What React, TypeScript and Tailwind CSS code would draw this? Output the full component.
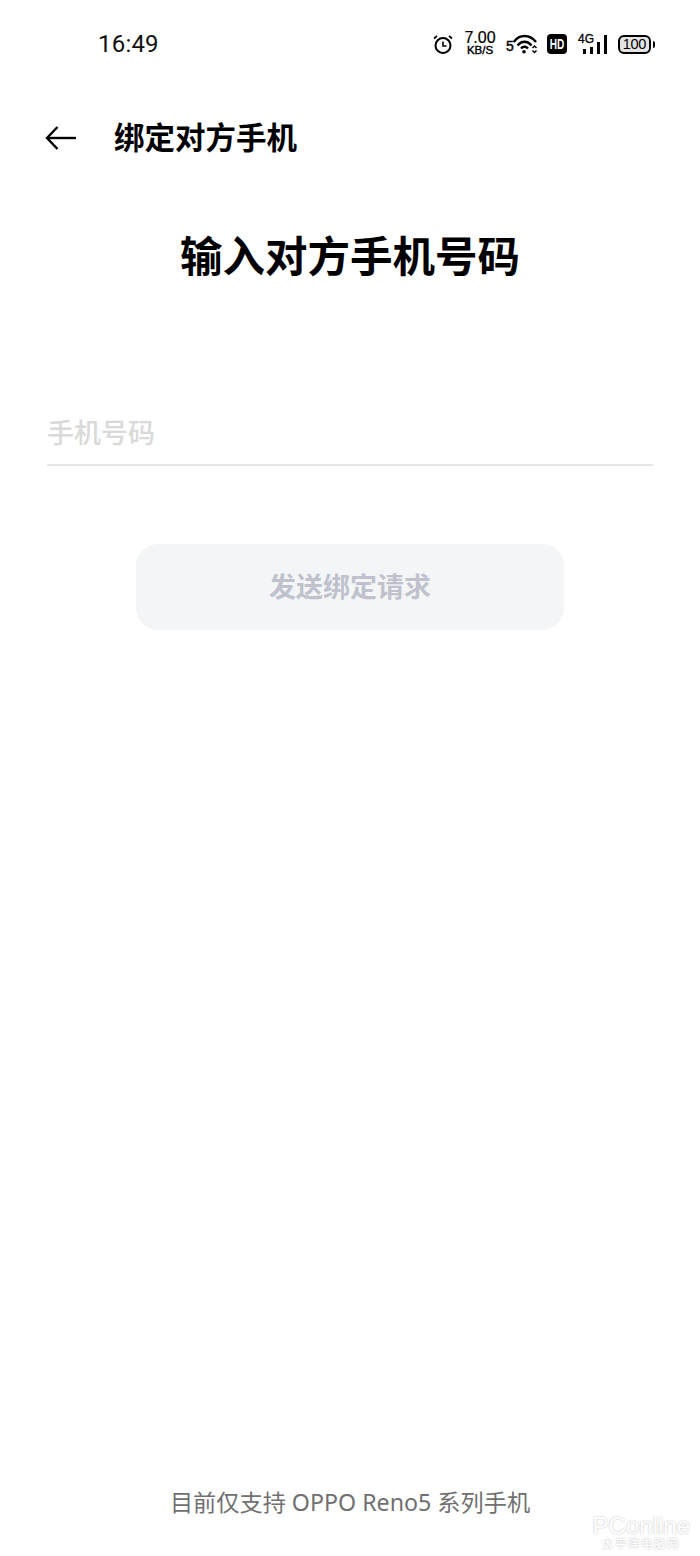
const cjk = "font-['Liberation_Sans','Noto_Sans_CJK_SC',sans-serif]";

function StatusIcons() {
  return (
    <div className="flex items-center text-black">
      {/* alarm */}
      <svg width="22" height="22" viewBox="0 0 22 22" fill="none" stroke="black" strokeWidth="2">
        <circle cx="11" cy="12.500" r="7.500" />
        <path d="M11 8.500v4.500h3.500" strokeWidth="1.600" />
        <path d="M2 5.500 5 3M20 5.500 17 3" strokeWidth="1.800" />
      </svg>
      {/* net speed */}
      <div className="ml-[10px] flex w-[32px] flex-col items-center font-['Liberation_Sans',sans-serif] leading-none">
        <span className="text-[16px] leading-[13px] [-webkit-text-stroke:0.2px_black]">7.00</span>
        <span className="text-[11.500px] leading-[13px] [-webkit-text-stroke:0.4px_black]">KB/S</span>
      </div>
      {/* 5G wifi */}
      <div className="ml-[10px] flex w-[31px] items-end">
        <span className="font-['Liberation_Sans',sans-serif] text-[14px] leading-[15px] [-webkit-text-stroke:0.4px_black]">5</span>
        <svg width="24" height="20" viewBox="0 0 24 20" fill="none" stroke="black" strokeWidth="2.400" className="-ml-[1px]">
          <path d="M0.800 8C3.500 4.200 7.500 2 11.500 2s8.500 2.200 11.500 6" />
          <path d="M4.500 11.500C6.500 9 9 7.700 11.500 7.700s5 1.300 7 3.800" />
          <path d="M8 14.500c1-1.200 2.200-1.800 3.500-1.800s2.500.6 3.500 1.800" />
          <circle cx="11" cy="17.800" r="1.800" fill="black" stroke="none" />
          <path d="M19.500 14l2-2 2 2M19.500 16.500l2 2 2-2" strokeWidth="1.500" />
        </svg>
      </div>
      {/* HD */}
      <div className="ml-[10px] flex h-[20px] w-[20px] items-center justify-center rounded-[4px] bg-black font-['Liberation_Sans',sans-serif] text-[14px] font-bold leading-none text-white">
        <span className="scale-x-[0.72]">HD</span>
      </div>
      {/* 4G signal */}
      <div className="relative ml-[11px] flex h-[20px] w-[29px] items-end justify-end gap-[4px]">
        <span className="absolute -top-[1px] left-0 font-['Liberation_Sans',sans-serif] text-[12px] leading-[12px] [-webkit-text-stroke:0.3px_black]">4G</span>
        <div className="h-[5px] w-[3px] bg-black" />
        <div className="h-[7px] w-[3px] bg-black" />
        <div className="h-[12px] w-[3px] bg-black" />
        <div className="h-[19px] w-[3px] bg-black" />
      </div>
      {/* battery */}
      <div className="ml-[11px] flex items-center">
        <div className="flex h-[19px] w-[33px] items-center justify-center rounded-[6px] border-2 border-black bg-[#e4e4e4] font-['Liberation_Sans',sans-serif] text-[14.500px] leading-none tracking-[-0.3px]">
          100
        </div>
        <div className="ml-[2px] h-[7px] w-[2px] rounded-r-sm bg-black" />
      </div>
    </div>
  );
}

export default function App() {
  return (
    <div className={`relative flex h-[1556px] w-[700px] flex-col overflow-hidden bg-white ${cjk}`}>
      {/* status bar */}
      <div className="mt-[22px] flex h-[44px] items-center justify-between pl-[98px] pr-[45px]">
        <span className="font-['Roboto',sans-serif] text-[24px] leading-none tracking-[0.2px] text-[#111]">16:49</span>
        <StatusIcons />
      </div>

      {/* header */}
      <div className="mt-[50px] flex h-[44px] items-center pl-[45px]">
        <svg width="32" height="24" viewBox="0 0 32 24" fill="none" stroke="black" strokeWidth="2.400">
          <path d="M31 12H2" />
          <path d="M12.500 1 2 12l10.500 11" />
        </svg>
        <h1 className="ml-[37px] text-[30.500px] font-bold leading-none text-black">绑定对方手机</h1>
      </div>

      <h2 className="mt-[77px] text-center text-[42.500px] font-bold leading-none text-black">输入对方手机号码</h2>

      {/* input */}
      <div className="mx-[47px] mt-[136px] h-[50px] border-b-2 border-[#e6e6e6] text-[27px] font-medium leading-[36px] text-[#d9d9d9]">
        手机号码
      </div>

      {/* button */}
      <div className="mx-auto mt-[78px] flex h-[86px] w-[428px] items-center justify-center rounded-[22px] bg-[#f4f5f7] pt-[4px] text-[27px] font-bold leading-none text-[#bfc2cc]">
        发送绑定请求
      </div>

      {/* footer */}
      <p className="mb-[39px] mt-auto text-center font-['Noto_Sans','Noto_Sans_CJK_SC',sans-serif] text-[23.200px] leading-[30px] text-[#707070]">目前仅支持 OPPO Reno5 系列手机</p>

      {/* watermark */}
      <div className="absolute bottom-[6px] right-[10px] flex flex-col items-center leading-none text-white [text-shadow:0_0_2px_#b5b5b5]">
        <span className="font-['Liberation_Sans',sans-serif] text-[24px] leading-[24px]">PConline</span>
        <span className="text-[11px] font-bold leading-[12px] tracking-[2px]">太平洋电脑网</span>
      </div>
    </div>
  );
}
